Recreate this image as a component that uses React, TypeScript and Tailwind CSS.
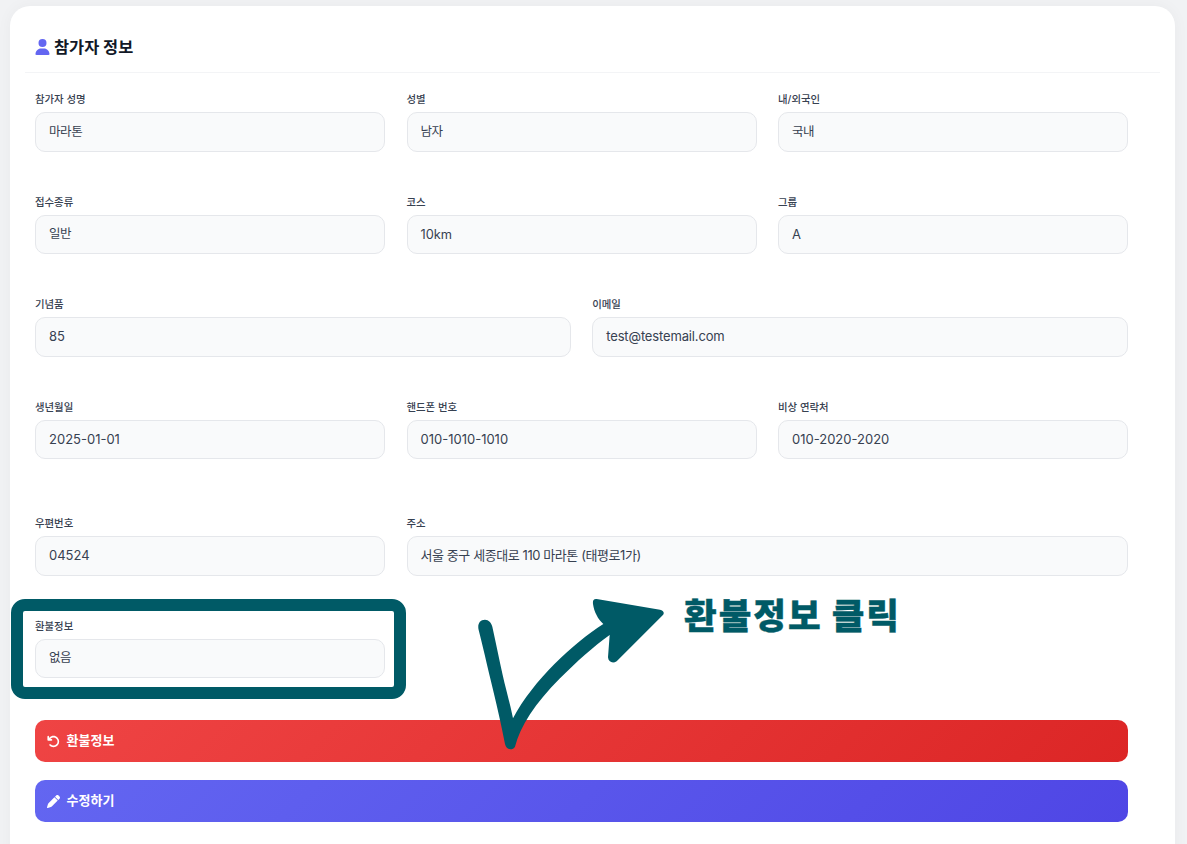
import React from 'react';
import { FaUser, FaPen, FaArrowRotateLeft } from 'react-icons/fa6';

const fontStack = "font-['Inter','Noto_Sans_CJK_KR',sans-serif]";

// 한글 값은 글자폭이 넓게 나와서 따로 줄임
const hangulValue = 'text-[12.5px] tracking-[-0.4px] pt-[1px]';
const rowClass = 'grid grid-cols-6 gap-x-[21.5px]';

interface FieldProps {
  label: string;
  value: string;
  span: string;
  valueClass?: string;
}

const Field: React.FC<FieldProps> = ({ label, value, span, valueClass = 'text-[13px]' }) => (
  <div className={span}>
    <label className="block h-[20px] text-[10.4px] leading-[15px] font-medium text-[#374151]">{label}</label>
    <div className={`h-[39.5px] flex items-center px-[13px] bg-[#f9fafb] border border-[#e5e7eb] rounded-[10px] text-[#374151] ${valueClass}`}>
      {value}
    </div>
  </div>
);

export default function App() {
  return (
    <div className={`${fontStack} relative h-[844px] overflow-hidden bg-[#f1f2f4] pt-[6px] pl-[10px] pr-[12px]`}>
      <div className="h-[900px] bg-white rounded-[20px] shadow-[0_0_16px_rgba(0,0,0,0.04)] px-[15px]">
        <div className="h-[67px] flex items-center pl-[10px] pt-[16px] gap-[4px] border-b border-[#f3f4f6]">
          <FaUser className="w-[15px] h-[16px] text-[#6366f1]" />
          <h3 className="text-[16.4px] font-bold text-[#111827]">참가자 정보</h3>
        </div>

        <div className="pl-[10px] pr-[32px] pt-[19px]">
          <div className={rowClass}>
            <Field span="col-span-2" label="참가자 성명" value="마라톤" valueClass={hangulValue} />
            <Field span="col-span-2" label="성별" value="남자" valueClass={hangulValue} />
            <Field span="col-span-2" label="내/외국인" value="국내" valueClass={hangulValue} />
          </div>
          <div className={`${rowClass} mt-[43px]`}>
            <Field span="col-span-2" label="접수종류" value="일반" valueClass={hangulValue} />
            <Field span="col-span-2" label="코스" value="10km" valueClass="text-[12.8px]" />
            <Field span="col-span-2" label="그룹" value="A" />
          </div>
          <div className={`${rowClass} mt-[43px]`}>
            <Field span="col-span-3" label="기념품" value="85" />
            <Field span="col-span-3" label="이메일" value="test@testemail.com" valueClass="text-[13px] tracking-[-0.15px]" />
          </div>
          <div className={`${rowClass} mt-[43px]`}>
            <Field span="col-span-2" label="생년월일" value="2025-01-01" />
            <Field span="col-span-2" label="핸드폰 번호" value="010-1010-1010" />
            <Field span="col-span-2" label="비상 연락처" value="010-2020-2020" />
          </div>
          <div className={`${rowClass} mt-[57px]`}>
            <Field span="col-span-2" label="우편번호" value="04524" />
            <Field span="col-span-4" label="주소" value="서울 중구 세종대로 110 마라톤 (태평로1가)" valueClass="text-[13px] tracking-[-0.42px]" />
          </div>
          <div className={`${rowClass} mt-[43px]`}>
            <Field span="col-span-2" label="환불정보" value="없음" valueClass={hangulValue} />
          </div>

          <div className="mt-[42px] flex flex-col gap-[18px]">
            <button className="h-[42px] flex items-center gap-[6.5px] px-[12px] rounded-[10px] bg-[linear-gradient(135deg,#ef4444,#dc2626)] text-white text-[13px] font-bold">
              <FaArrowRotateLeft className="w-[13px] h-[13px]" />
              <span className="-mt-[1px]">환불정보</span>
            </button>
            <button className="h-[42px] flex items-center gap-[6.5px] px-[12px] rounded-[10px] bg-[linear-gradient(135deg,#6366f1,#4f46e5)] text-white text-[13px] font-bold">
              <FaPen className="w-[13px] h-[13px]" />
              <span className="-mt-[1px]">수정하기</span>
            </button>
          </div>
        </div>
      </div>

      {/* annotation drawn over the page */}
      <div className="absolute left-[11px] top-[599px] w-[395px] h-[100px] border-[12px] border-[#005a66] rounded-[14px]" />
      <svg className="absolute left-[460px] top-[580px] w-[460px] h-[190px]" viewBox="0 0 1380 570">
        <path
          fill="#005a66"
          d="M75 119 C58 119 52 134 56 150 C70 205 80 250 92 300 C108 365 124 435 135 492 C138 508 156 514 165 500 C180 440 225 370 300 295 C350 245 400 200 449 165 L444 232 C445 246 458 252 470 244 L608 106 C615 98 610 91 600 89 L410 57 C400 56 398 62 399 72 C402 95 414 118 430 132 C340 190 220 300 159 415 C150 370 138 330 128 285 C118 240 108 190 97 140 C94 128 86 119 75 119 Z"
        />
      </svg>
      <div className="absolute left-[684px] top-[591px] text-[35.5px] leading-[52px] font-black tracking-[2px] [-webkit-text-stroke:0.4px_#005a66] text-[#005a66] whitespace-nowrap">
        환불정보 클릭
      </div>
    </div>
  );
}
